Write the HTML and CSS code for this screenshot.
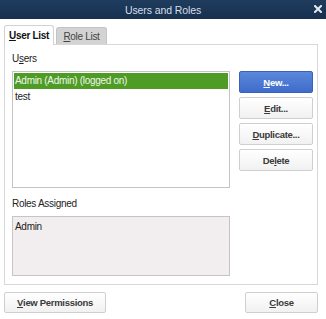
FILE: index.html
```html
<!DOCTYPE html>
<html>
<head>
<meta charset="utf-8">
<link rel="stylesheet" href="styles.css">
</head>
<body>
<div class="titlebar">
  <span class="title">Users and Roles</span>
  <svg class="close-x" width="8" height="8" viewBox="0 0 8 8"><path d="M1 1 L7 7 M7 1 L1 7" stroke="#e6ebf0" stroke-width="2" stroke-linecap="square"/></svg>
</div>
<div class="content">
  <div class="tabs">
    <div class="tab active"><u>U</u>ser List</div>
    <div class="tab"><u>R</u>ole List</div>
  </div>
  <div class="panel">
    <div class="label">U<u>s</u>ers</div>
    <div class="row-main">
      <div class="listbox">
        <div class="item selected">Admin (Admin) (logged on)</div>
        <div class="item">test</div>
      </div>
      <div class="side">
        <div class="btn primary"><u>N</u>ew...</div>
        <div class="btn"><u>E</u>dit...</div>
        <div class="btn"><u>D</u>uplicate...</div>
        <div class="btn">De<u>l</u>ete</div>
      </div>
    </div>
    <div class="label roles-label">Roles Assigned</div>
    <div class="rolesbox">
      <div class="item">Admin</div>
    </div>
  </div>
  <div class="footer">
    <div class="btn wide"><u>V</u>iew Permissions</div>
    <div class="btn close"><u>C</u>lose</div>
  </div>
</div>
</body>
</html>
```
FILE: styles.css
```css
* { box-sizing: border-box; }
html, body {
  margin: 0;
  padding: 0;
  background: #ffffff;
  font-family: "Liberation Sans", Arial, sans-serif;
  font-size: 10px;
  letter-spacing: -0.3px;
  color: #222;
}
u { text-decoration: underline; text-underline-offset: 1px; }
.titlebar {
  height: 19px;
  background: linear-gradient(#1f3c5e, #17314f);
  display: flex;
  align-items: center;
  justify-content: center;
  position: relative;
}
.title {
  color: #d6dee8;
  font-size: 10.5px;
  letter-spacing: -0.1px;
}
.close-x {
  position: absolute;
  right: 4px;
  top: 5px;
}
.content {
  padding: 6px 8px 0 4px;
}
.tabs {
  display: flex;
  align-items: flex-end;
  gap: 2px;
  height: 19px;
  position: relative;
  z-index: 1;
}
.tab {
  height: 17px;
  width: 51px;
  background: #d3d3d3;
  border: 1px solid #c4c4c4;
  border-bottom: none;
  border-radius: 3px 3px 0 0;
  display: flex;
  align-items: center;
  justify-content: center;
  color: #444;
  padding-top: 1px;
}
.tab.active {
  height: 20px;
  width: 50px;
  background: #fff;
  border-color: #d2d2d2;
  font-weight: bold;
  color: #111;
  margin-bottom: -1px;
  padding-top: 0;
}
.panel {
  border: 1px solid #d8d8d8;
  padding: 8px 4px 7px 7px;
  height: 241px;
}
.label {
  height: 12px;
  line-height: 12px;
  margin-bottom: 6px;
  color: #222;
}
.roles-label { margin-top: 10px; }
.row-main {
  display: flex;
  gap: 9px;
}
.listbox {
  width: 218px;
  height: 117px;
  border: 1px solid #c4c4c4;
  padding: 1px;
  background: #fff;
}
.item {
  height: 16px;
  line-height: 16px;
  padding-left: 1px;
}
.item.selected {
  background: #4e9b25;
  color: #eef7e8;
}
.side {
  display: flex;
  flex-direction: column;
  gap: 4px;
  width: 74px;
}
.btn {
  height: 22px;
  border: 1px solid #cfcfcf;
  border-radius: 2px;
  background: linear-gradient(#ffffff, #f1f1f1);
  display: flex;
  align-items: center;
  justify-content: center;
  font-weight: bold;
  font-size: 9.5px;
  color: #3a3a3a;
}
.btn.primary {
  background: linear-gradient(#5b88da, #3f6ccb);
  border-color: #3a62b8;
  color: #fff;
}
.rolesbox {
  width: 218px;
  height: 60px;
  border: 1px solid #c8c4c6;
  background: #f2eef0;
  padding: 2px 1px;
}
.footer {
  display: flex;
  justify-content: space-between;
  margin-top: 7px;
}
.btn.wide { width: 102px; height: 21px; }
.btn.close { width: 73px; height: 21px; }
```
